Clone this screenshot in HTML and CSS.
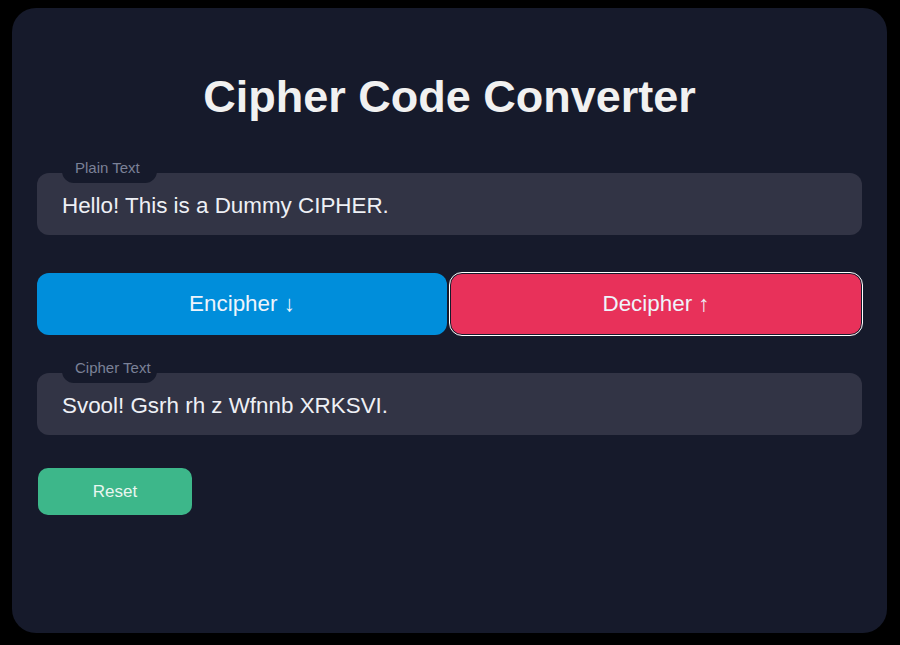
FILE: index.html
```html
<!DOCTYPE html>
<html>
<head>
<meta charset="utf-8">
<link rel="stylesheet" href="styles.css">
</head>
<body>
<main class="card">
  <h1 class="title">Cipher Code Converter</h1>
  <div class="field">
    <span class="label">Plain Text</span>
    <div class="input">Hello! This is a Dummy CIPHER.</div>
  </div>
  <div class="actions">
    <button class="btn btn-enc">Encipher ↓</button>
    <button class="btn btn-dec">Decipher ↑</button>
  </div>
  <div class="field">
    <span class="label">Cipher Text</span>
    <div class="input">Svool! Gsrh rh z Wfnnb XRKSVI.</div>
  </div>
  <div class="reset-row">
    <button class="reset">Reset</button>
  </div>
</main>
</body>
</html>
```
FILE: styles.css
```css
html, body {
  margin: 0;
  padding: 0;
  background: #000;
  height: 100%;
}
body {
  padding: 8px 13px 12px 12px;
  box-sizing: border-box;
  font-family: "Liberation Sans", Arial, sans-serif;
}
.card {
  background: #161a2b;
  border-radius: 24px;
  height: 625px;
  box-sizing: border-box;
  padding: 64px 25px 0 25px;
  display: flex;
  flex-direction: column;
}
.title {
  margin: 0 0 51px 0;
  text-align: center;
  font-size: 45px;
  line-height: 50px;
  font-weight: 700;
  color: #f1f1f1;
}
.field {
  position: relative;
}
.label {
  position: absolute;
  left: 25px;
  top: -16px;
  width: 95px;
  height: 26px;
  box-sizing: border-box;
  background: #161a2b;
  border-radius: 0 0 12px 12px;
  color: #7b8197;
  font-size: 15px;
  line-height: 22px;
  padding-left: 13px;
}
.input {
  background: #323445;
  border-radius: 12px;
  height: 62px;
  box-sizing: border-box;
  padding: 3px 25px 0 25px;
  display: flex;
  align-items: center;
  color: #eef0f5;
  font-size: 22.4px;
}
.actions {
  display: flex;
  gap: 3px;
  margin: 38px 0 38px 0;
}
.btn {
  flex: 1;
  height: 62px;
  border-radius: 12px;
  font-family: "Liberation Sans", Arial, sans-serif;
  font-size: 22.4px;
  color: #eef4fb;
  cursor: pointer;
}
.btn-enc {
  background: #008edb;
  border: none;
}
.btn-dec {
  background: #e8315a;
  border: 1px solid #161a2b;
  outline: 1.5px solid #ffffff;
  outline-offset: 0;
}
.reset-row {
  margin-top: 33px;
  padding-left: 1px;
}
.reset {
  width: 154px;
  height: 47px;
  border: none;
  border-radius: 10px;
  background: #3db78a;
  color: #e9f6f0;
  font-family: "Liberation Sans", Arial, sans-serif;
  font-size: 17px;
}
```
